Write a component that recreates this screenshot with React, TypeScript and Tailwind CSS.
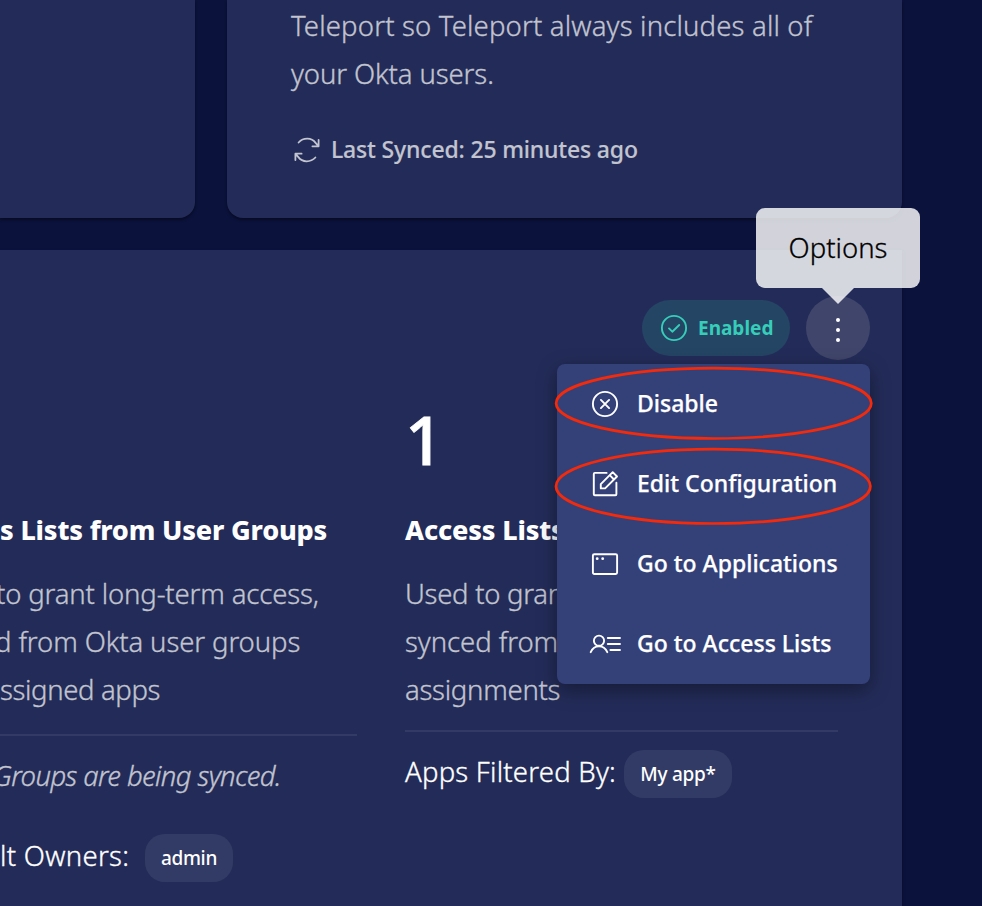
import type { ReactNode } from "react";

function SyncIcon() {
  return (
    <svg width="28" height="28" viewBox="0 0 28 28" fill="none" stroke="currentColor" strokeWidth="1.8" strokeLinecap="round" strokeLinejoin="round">
      <path d="M5.6 6.5C10.4 1.4 18.6 1.4 22.6 6.9L25.2 9.9M25.6 3.9V10.3H19.4" />
      <path d="M22.4 21.5C17.6 26.6 9.4 26.6 5.4 21.1L2.8 18.1M2.4 24.1V17.7H8.6" />
    </svg>
  );
}

function CheckCircleIcon() {
  return (
    <svg width="28" height="28" viewBox="0 0 28 28" fill="none" stroke="currentColor" strokeWidth="1.9" strokeLinecap="round" strokeLinejoin="round">
      <circle cx="14" cy="14" r="12.1" />
      <path d="M9 14.4L12.3 17.7L19.2 11" />
    </svg>
  );
}

function CrossCircleIcon() {
  return (
    <svg width="28" height="28" viewBox="0 0 28 28" fill="none" stroke="currentColor" strokeWidth="1.9" strokeLinecap="round">
      <circle cx="14" cy="14" r="12.1" />
      <path d="M9.9 9.9L18.1 18.1M18.1 9.9L9.9 18.1" />
    </svg>
  );
}

function EditIcon() {
  return (
    <svg width="28" height="28" viewBox="0 0 28 28" fill="none" stroke="currentColor" strokeWidth="1.9" strokeLinecap="round" strokeLinejoin="round">
      <path d="M15.6 2.9H3.8a1 1 0 0 0-1 1V24.2a1 1 0 0 0 1 1H24.4a1 1 0 0 0 1-1V12.8" />
      <path d="M9.8 14.1V18.4H14.1L26 6.5L21.7 2.2Z M18.7 5.2L23 9.5" />
    </svg>
  );
}

function WindowIcon() {
  return (
    <svg width="28" height="28" viewBox="0 0 28 28" fill="none" stroke="currentColor" strokeWidth="1.9">
      <rect x="1.9" y="4.2" width="24.2" height="19.8" rx="1.4" />
      <circle cx="6.2" cy="8.7" r="1.4" fill="currentColor" stroke="none" />
      <circle cx="11.7" cy="8.7" r="1.4" fill="currentColor" stroke="none" />
    </svg>
  );
}

function UserListIcon() {
  return (
    <svg width="32" height="28" viewBox="0 0 32 28" fill="none" stroke="currentColor" strokeWidth="1.9" strokeLinecap="round">
      <circle cx="10" cy="10.7" r="5.1" />
      <path d="M1.7 22.2C5.2 14.2 14.8 14.2 18.3 22.2" />
      <path d="M18.8 8H31M18.8 14H31M21.4 20H31" />
    </svg>
  );
}

function MenuItem({ icon, children }: { icon: ReactNode; children: ReactNode }) {
  return (
    <li className="flex h-20 items-center pl-8 text-[23px] font-medium text-white [-webkit-text-stroke:0.25px]">
      <span className="flex w-8 shrink-0 justify-center">{icon}</span>
      <span className="ml-4 pb-0.5">{children}</span>
    </li>
  );
}

function Tag({ children, className }: { children: ReactNode; className: string }) {
  return (
    <span className={`flex h-12 items-center justify-center rounded-[20px] bg-white/[0.07] text-[19px] font-medium text-white ${className}`}>
      {children}
    </span>
  );
}

function OptionsTooltip() {
  return (
    <div className="absolute top-[208px] left-[756px] flex h-24 w-[164px] flex-col items-center">
      <div className="flex h-20 w-full shrink-0 items-center justify-center rounded-[9px] bg-white/[0.81] text-[27.5px] font-light text-black [-webkit-text-stroke:0.3px]">
        Options
      </div>
      <div className="h-4 w-8 bg-white/[0.81] [clip-path:polygon(0_0,100%_0,50%_100%)]" />
    </div>
  );
}

function OptionsMenu() {
  return (
    <ul className="absolute top-[364px] left-[557px] h-80 w-[313px] rounded-lg bg-[#344179] shadow-[0_6px_20px_rgba(0,0,0,0.4)]">
      <MenuItem icon={<CrossCircleIcon />}>Disable</MenuItem>
      <MenuItem icon={<EditIcon />}>Edit Configuration</MenuItem>
      <MenuItem icon={<WindowIcon />}>Go to Applications</MenuItem>
      <MenuItem icon={<UserListIcon />}>Go to Access Lists</MenuItem>
    </ul>
  );
}

export default function App() {
  return (
    <div className="relative flex h-[906px] w-[982px] flex-col overflow-hidden bg-[#0b123c] font-['Noto_Sans',sans-serif] whitespace-nowrap">
      <div className="flex h-[218px] shrink-0 gap-8">
        <section className="w-[195px] rounded-br-2xl bg-[#232c59] shadow-[0_2px_3px_rgba(0,0,0,0.4)]" />
        <section className="w-[675px] rounded-b-2xl bg-[#232c59] pt-0.5 pl-16 text-[#c2c4d0] shadow-[0_2px_3px_rgba(0,0,0,0.4)]">
          <p className="text-[27.5px] leading-[48px] font-light tracking-[0.17px] [-webkit-text-stroke:0.35px]">
            Teleport so Teleport always includes all of
            <br />
            <span className="tracking-[-0.1px]">your Okta users.</span>
          </p>
          <div className="mt-7 flex h-12 items-center pl-0.5 text-[23px] font-medium tracking-[-0.17px] [-webkit-text-stroke:0.15px]">
            <SyncIcon />
            <span className="ml-2.5 pb-0.5">Last Synced: 25 minutes ago</span>
          </div>
        </section>
      </div>

      <main className="mt-8 h-[656px] w-[902px] shrink-0 bg-[#232c59] pt-[46px] shadow-[0_2px_3px_rgba(0,0,0,0.4)]">
        <header className="flex h-16 items-center justify-end gap-4 pr-8">
          <div className="flex h-14 w-[148px] items-center rounded-full bg-[#254565] pl-[18px] text-[19px] font-bold text-[#36cdb9]">
            <CheckCircleIcon />
            <span className="ml-2.5">Enabled</span>
          </div>
          <button className="flex size-16 flex-col items-center justify-center gap-1.5 rounded-full bg-[#40466b] pt-1">
            <span className="size-1 rounded-full bg-white" />
            <span className="size-1 rounded-full bg-white" />
            <span className="size-1 rounded-full bg-white" />
          </button>
        </header>

        <div className="flex gap-12 pt-[39px]">
          <section className="w-[357px] overflow-hidden">
            <h2 className="mt-[115px] h-8 text-[27px] leading-8 font-extrabold tracking-[-0.18px] text-white">s Lists from User Groups</h2>
            <div className="mt-6 text-[27.5px] leading-[48px] font-light text-[#c2c4d0] [-webkit-text-stroke:0.35px]">
              <p className="-ml-1 tracking-[-0.15px]">to grant long-term access,</p>
              <p className="-ml-[5px] tracking-[-0.1px]">d from Okta user groups</p>
              <p className="tracking-[-0.37px]">ssigned apps</p>
            </div>
            <hr className="mt-5 h-0.5 border-0 bg-[#323a65]" />
            <p className="mt-4 -ml-[7px] text-[27.5px] leading-[48px] font-light tracking-[-0.62px] text-[#c2c4d0] italic [-webkit-text-stroke:0.35px]">
              Groups are being synced.
            </p>
            <div className="mt-8 flex items-start text-[27.5px] leading-[48px] font-light text-white">
              <span className="w-[145px] tracking-[0.3px] [-webkit-text-stroke:0.35px]">lt Owners:</span>
              <Tag className="mt-0.5 w-[88px] tracking-[-0.35px]">admin</Tag>
            </div>
          </section>

          <section className="w-[433px]">
            <div className="h-20 text-[67px] leading-[80px] font-medium text-white [-webkit-text-stroke:0.9px]">1</div>
            <h2 className="mt-[35px] h-8 text-[27px] leading-8 font-extrabold tracking-[-0.18px] text-white">Access Lists</h2>
            <div className="mt-6 text-[27.5px] leading-[48px] font-light tracking-[-0.27px] text-[#c2c4d0] [-webkit-text-stroke:0.35px]">
              <p>Used to grant</p>
              <p className="tracking-[-0.05px]">synced from</p>
              <p>assignments</p>
            </div>
            <hr className="mt-4 h-0.5 border-0 bg-[#323a65]" />
            <div className="mt-4 flex items-start text-[27.5px] leading-[48px] font-light text-white">
              <span className="w-[219px] tracking-[0.23px] [-webkit-text-stroke:0.35px]">Apps Filtered By:</span>
              <Tag className="mt-0.5 w-[108px] tracking-[-0.25px]">My app*</Tag>
            </div>
          </section>
        </div>
      </main>

      <OptionsMenu />
      <OptionsTooltip />

      <svg className="pointer-events-none absolute top-[360px] left-[550px]" width="330" height="170" viewBox="0 0 330 170" fill="none" stroke="#f42a0b" strokeWidth="2.7">
        <ellipse cx="163.7" cy="43.3" rx="157.6" ry="35.2" />
        <ellipse cx="163.2" cy="126.3" rx="157.2" ry="37.2" />
      </svg>
    </div>
  );
}
